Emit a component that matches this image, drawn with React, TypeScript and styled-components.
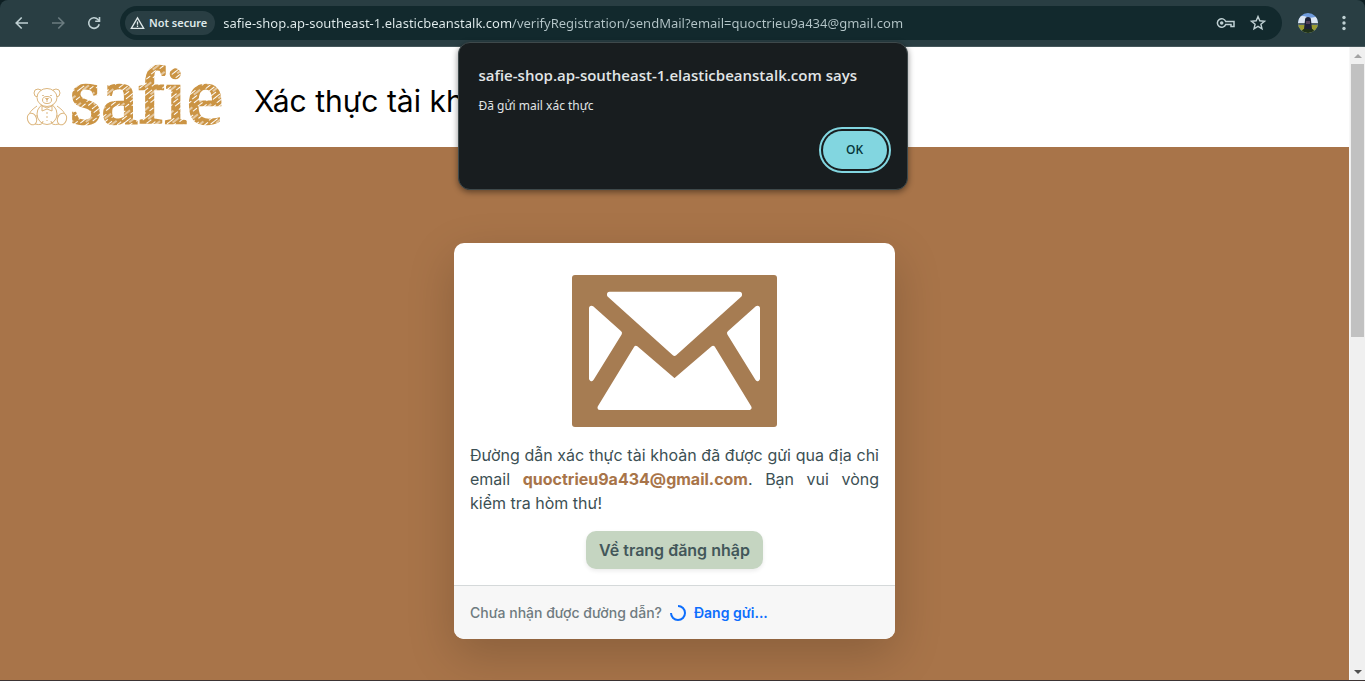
import React from "react";
import styled, { createGlobalStyle, css } from "styled-components";

const uiFont = `"Open Sans", "Noto Sans", sans-serif`;
const uiTextFont = `"Noto Sans", "Open Sans", sans-serif`;
const pageFont = `Inter, "Liberation Sans", sans-serif`;

const GlobalStyle = createGlobalStyle`
  *, *::before, *::after { box-sizing: border-box; }
  body { margin: 0; background: #0e1f23; }
`;

const Window = styled.div`
  position: relative;
  display: flex;
  flex-direction: column;
  min-height: 100vh;
  border-bottom: 1px solid #3c3434;
`;

const Toolbar = styled.header`
  display: flex;
  align-items: center;
  height: 47px;
  padding: 0 3px 0 4px;
  border-bottom: 1px solid #45575b;
  border-radius: 8px 8px 0 0;
  background: #293e43;
  font-family: ${uiFont};
`;

const ToolButton = styled.button<{ $dim?: boolean; $narrow?: boolean }>`
  display: flex;
  align-items: center;
  justify-content: center;
  flex: none;
  width: ${(p) => (p.$narrow ? 32 : 36)}px;
  height: 32px;
  padding: 0;
  border: 0;
  background: none;
  color: ${(p) => (p.$dim ? "#6b7c80" : "#bfd0d3")};
`;

const AddressBar = styled.div`
  display: flex;
  align-items: center;
  flex: 1;
  min-width: 0;
  height: 34px;
  margin: 0 8px;
  padding: 0 8px 0 5px;
  border-radius: 17px;
  background: #12292d;
`;

const SecurityChip = styled.button`
  display: flex;
  align-items: center;
  flex: none;
  gap: 4px;
  height: 24px;
  padding: 0 8px 0 5px;
  border: 0;
  border-radius: 12px;
  background: #293e43;
  color: #dfe8e9;
  font: 600 11px/24px ${uiTextFont};
`;

const UrlInput = styled.input`
  flex: 1;
  min-width: 0;
  height: 24px;
  margin-left: 8px;
  padding: 0;
  border: 0;
  outline: 0;
  color: #e1eced;
  font: 400 13px/24px ${uiTextFont};
  background: linear-gradient(to right, #e3eeef 289px, #b4c5c8 289px);
  background-clip: text;
  -webkit-background-clip: text;
  -webkit-text-fill-color: transparent;
`;

const Viewport = styled.div`
  display: flex;
  flex: 1;
`;

const Page = styled.div`
  display: flex;
  flex: 1;
  flex-direction: column;
  min-width: 0;
  font-family: ${pageFont};
`;

const SiteHeader = styled.header`
  display: flex;
  align-items: center;
  gap: 28px;
  height: 100px;
  padding: 0 24px;
  background: #fff;
`;

const LogoLink = styled.a`
  display: flex;
`;

const SiteTitle = styled.h1`
  margin: 0;
  padding-top: 8px;
  color: #000;
  font: 400 30px/40px ${pageFont};
`;

const Main = styled.main`
  display: flex;
  flex: 1;
  flex-direction: column;
  align-items: center;
  padding: 96px 16px 41px;
  background: #a87449;
`;

const Card = styled.section`
  width: 100%;
  max-width: 441px;
  border-radius: 10px;
  background: #fff;
  box-shadow: 0 16px 48px rgba(0, 0, 0, 0.18);
`;

const CardBody = styled.div`
  display: flex;
  flex-direction: column;
  align-items: center;
  gap: 16px;
  padding: 32px 16px 16px;
`;

const Message = styled.p`
  width: 100%;
  margin: 0;
  color: #3c5054;
  font-size: 16px;
  line-height: 24px;
  text-align: justify;
`;

const Email = styled.strong`
  color: #a87449;
  font-weight: 700;
`;

const LoginButton = styled.button`
  height: 38px;
  padding: 0 13px;
  border: 0;
  border-radius: 10px;
  background: #c5d5c1;
  box-shadow: 0 2px 4px rgba(0, 0, 0, 0.08);
  color: #43575a;
  font: 600 16px/24px ${pageFont};
`;

const CardFooter = styled.footer`
  display: flex;
  align-items: center;
  gap: 8px;
  padding: 16px;
  border-top: 1px solid #d5d9da;
  border-radius: 0 0 10px 10px;
  background: #f7f7f7;
  color: #6f7b80;
  font-size: 14px;
  font-weight: 500;
  line-height: 21px;
`;

const ResendLink = styled.a`
  display: flex;
  align-items: center;
  gap: 8px;
  color: #0d6efd;
  font-weight: 600;
  text-decoration: none;
`;

const ScrollTrack = styled.div`
  display: flex;
  flex: none;
  flex-direction: column;
  width: 16px;
  padding-left: 1px;
  border-left: 1px solid #f7f7f7;
  background: #f0f0f0;
`;

const ScrollArrow = styled.div<{ $down?: boolean }>`
  display: flex;
  align-items: center;
  justify-content: center;
  height: 17px;
  color: ${(p) => (p.$down ? "#505050" : "#a3a3a3")};
  ${(p) =>
    p.$down &&
    css`
      margin-top: auto;
    `}
`;

const ScrollThumb = styled.div`
  flex: 0 1 273px;
  margin-right: 1px;
  background: #c1c1c1;
`;

const Dialog = styled.div`
  position: absolute;
  top: 42px;
  left: 50%;
  display: flex;
  flex-direction: column;
  width: 450px;
  padding: 20px 16px 16px 20px;
  border: 1px solid #3e494b;
  border-radius: 12px;
  background: #181d1f;
  box-shadow: 0 2px 6px rgba(0, 0, 0, 0.45);
  color: #e1e5e6;
  font-family: ${uiFont};
  transform: translateX(-50%);
`;

const DialogTitle = styled.h2`
  margin: 0;
  font-size: 15px;
  font-weight: 600;
  line-height: 24px;
`;

const DialogText = styled.p`
  margin: 9px 0 15px;
  font-family: ${uiTextFont};
  font-size: 12px;
  line-height: 20px;
`;

const OkButton = styled.button`
  align-self: flex-end;
  width: 64px;
  height: 38px;
  margin: 0 4px 4px 0;
  padding: 0;
  border: 0;
  border-radius: 19px;
  outline: 2px solid #82d6e0;
  outline-offset: 2px;
  background: #82d6e0;
  color: #06363c;
  font: 600 12px/20px ${uiFont};
`;

const ArrowIcon = ({ flip }: { flip?: boolean }) => (
  <svg width="18" height="18" viewBox="0 0 18 18" fill="none" stroke="currentColor" strokeWidth="1.6" aria-hidden="true">
    <path d={flip ? "M3 9h11.500M9.300 3.500L14.800 9l-5.500 5.500" : "M15 9H3.500M8.700 3.500L3.200 9l5.500 5.500"} />
  </svg>
);

const ReloadIcon = () => (
  <svg width="18" height="18" viewBox="0 0 18 18" fill="none" stroke="currentColor" strokeWidth="1.6" aria-hidden="true">
    <path d="M14.200 10.200A5.300 5.300 0 1 1 13 5.500L14.300 7" />
    <path d="M14.500 3v4.300h-4.300" />
  </svg>
);

const WarningIcon = () => (
  <svg width="15" height="14" viewBox="0 0 15 14" fill="none" stroke="currentColor" strokeWidth="1.3" aria-hidden="true">
    <path d="M7.500 1.800L13.700 12.300H1.300Z" />
    <path d="M7.500 5.500v3.200M7.500 9.600v1.300" />
  </svg>
);

const KeyIcon = () => (
  <svg width="20" height="12" viewBox="0 0 20 12" fill="none" stroke="currentColor" strokeWidth="1.5" aria-hidden="true">
    <path d="M9.700 4.500H18v5h-3V7.500H9.700A4.300 4.300 0 1 1 9.700 4.500Z" />
    <circle cx="5.700" cy="6" r="1.800" fill="currentColor" stroke="none" />
  </svg>
);

const StarIcon = () => (
  <svg width="18" height="18" viewBox="0 0 18 18" fill="none" stroke="currentColor" strokeWidth="1.4" aria-hidden="true">
    <path d="M9 2.500l1.800 4.300 4.700.4-3.600 3 1.100 4.600L9 12.400l-4 2.400 1.100-4.600-3.600-3 4.700-.4Z" />
  </svg>
);

const Avatar = () => (
  <svg width="20" height="20" viewBox="0 0 20 20" aria-hidden="true">
    <defs>
      <clipPath id="avatar-clip">
        <circle cx="10" cy="10" r="10" />
      </clipPath>
    </defs>
    <g clipPath="url(#avatar-clip)">
      <path fill="#6f9bdc" d="M0 0h20v20H0z" />
      <path fill="#dce6f3" d="M0 4q5-2 9 0t11-1v8H0z" />
      <path fill="#53636a" d="M0 10h20v3H0z" />
      <path fill="#9a9b31" d="M0 12h20v8H0z" />
      <path fill="#1e3019" d="M3 20q1-5 7-5t7 5z" />
      <path fill="#1c2136" d="M7 7q0-3 3-3t3 3l1 9H6z" />
      <path fill="#51405b" d="M8 8h4v3H8z" />
    </g>
  </svg>
);

const DotsIcon = () => (
  <svg width="18" height="18" viewBox="0 0 18 18" fill="currentColor" aria-hidden="true">
    <circle cx="9" cy="3.500" r="1.700" />
    <circle cx="9" cy="9" r="1.700" />
    <circle cx="9" cy="14.500" r="1.700" />
  </svg>
);

const Logo = () => (
  <svg width="202" height="92" viewBox="0 0 202 92" role="img" aria-label="safie">
    <defs>
      <pattern id="sketch" width="17" height="9" patternUnits="userSpaceOnUse" patternTransform="rotate(-38)">
        <path fill="#cb9444" d="M0 0h17v9H0z" />
        <path stroke="#fff" strokeWidth="1" fill="none" d="M0 1.500h9M5 4h8M1 6.500h6M11 7.500h5" />
      </pattern>
    </defs>
    <g fill="#fff" stroke="#dcb67e" strokeWidth="1" transform="translate(0 16)">
      <circle cx="14" cy="26" r="4" />
      <circle cx="32" cy="26" r="4" />
      <path d="M13 39Q4 45 5 50q3 3 10-3M33 39q9 6 8 11-3 3-10-3" />
      <ellipse cx="23" cy="47" rx="10" ry="10.500" />
      <ellipse cx="23" cy="30.500" rx="10" ry="9" />
      <ellipse cx="8" cy="52" rx="4.500" ry="6" transform="rotate(-20 8 52)" />
      <ellipse cx="38" cy="52" rx="4.500" ry="6" transform="rotate(20 38 52)" />
      <path d="M11 57q8 2 8-3M35 57q-8 2-8-3" fill="none" />
      <ellipse cx="23" cy="33" rx="4.500" ry="3.500" />
      <path d="M23 41l-5-2v5l5-2 5 2v-5zM21.500 31.500h3l-1.500 1.500zM23 33v2" />
      <path d="M23 45v9" strokeDasharray="2 2" />
      <path d="M18.500 28.500h1M26.500 28.500h1" stroke="#b9843c" />
    </g>
    <text
      x="46"
      y="72"
      fill="url(#sketch)"
      stroke="url(#sketch)"
      strokeWidth="2.500"
      fontFamily="'Liberation Serif', serif"
      fontSize="81"
      style={{ fontVariantLigatures: "none" }}
    >
      safie
    </text>
  </svg>
);

const Envelope = () => (
  <svg width="205" height="152" viewBox="0 0 205 152" role="img" aria-label="Email">
    <rect width="205" height="152" rx="3" fill="#a67c52" />
    <g fill="#fff" stroke="#fff" strokeWidth="5" strokeLinejoin="round">
      <path d="M37.500 19.200H167.500V20L102.500 78.500L37.500 20Z" />
      <path d="M19.500 33.200L47.500 58.200L19.500 103.500Z" />
      <path d="M185.500 33.200L157.500 58.200L185.500 103.500Z" />
      <path d="M64 73.500L102.500 106.500L141 73.500L177 132.500H28Z" />
    </g>
  </svg>
);

const Spinner = () => (
  <svg width="16" height="16" viewBox="0 0 16 16" fill="none" stroke="currentColor" strokeWidth="2" aria-hidden="true">
    <path d="M8 1A7 7 0 1 1 1 8" />
  </svg>
);

export default function App() {
  return (
    <Window>
      <GlobalStyle />
      <Toolbar>
        <ToolButton aria-label="Back"><ArrowIcon /></ToolButton>
        <ToolButton aria-label="Forward" $dim><ArrowIcon flip /></ToolButton>
        <ToolButton aria-label="Reload"><ReloadIcon /></ToolButton>
        <AddressBar>
          <SecurityChip><WarningIcon />Not secure</SecurityChip>
          <UrlInput
            aria-label="Address"
            defaultValue="safie-shop.ap-southeast-1.elasticbeanstalk.com/verifyRegistration/sendMail?email=quoctrieu9a434@gmail.com"
          />
          <ToolButton aria-label="Passwords" $narrow><KeyIcon /></ToolButton>
          <ToolButton aria-label="Bookmark" $narrow><StarIcon /></ToolButton>
        </AddressBar>
        <ToolButton aria-label="Profile"><Avatar /></ToolButton>
        <ToolButton aria-label="Menu"><DotsIcon /></ToolButton>
      </Toolbar>
      <Viewport>
        <Page>
          <SiteHeader>
            <LogoLink href="#"><Logo /></LogoLink>
            <SiteTitle>Xác thực tài khoản</SiteTitle>
          </SiteHeader>
          <Main>
            <Card>
              <CardBody>
                <Envelope />
                <Message>
                  Đường dẫn xác thực tài khoản đã được gửi qua địa chỉ email{" "}
                  <Email>quoctrieu9a434@gmail.com</Email>. Bạn vui vòng kiểm tra hòm thư!
                </Message>
                <LoginButton>Về trang đăng nhập</LoginButton>
              </CardBody>
              <CardFooter>
                <span>Chưa nhận được đường dẫn?</span>
                <ResendLink href="#"><Spinner />Đang gửi...</ResendLink>
              </CardFooter>
            </Card>
          </Main>
        </Page>
        <ScrollTrack aria-hidden="true">
          <ScrollArrow>
            <svg width="8" height="4" viewBox="0 0 8 4"><path d="M0 4l4-4 4 4z" fill="currentColor" /></svg>
          </ScrollArrow>
          <ScrollThumb />
          <ScrollArrow $down>
            <svg width="8" height="4" viewBox="0 0 8 4"><path d="M0 0l4 4 4-4z" fill="currentColor" /></svg>
          </ScrollArrow>
        </ScrollTrack>
      </Viewport>
      <Dialog role="alertdialog" aria-labelledby="alert-title" aria-describedby="alert-text">
        <DialogTitle id="alert-title">safie-shop.ap-southeast-1.elasticbeanstalk.com says</DialogTitle>
        <DialogText id="alert-text">Đã gửi mail xác thực</DialogText>
        <OkButton>OK</OkButton>
      </Dialog>
    </Window>
  );
}
